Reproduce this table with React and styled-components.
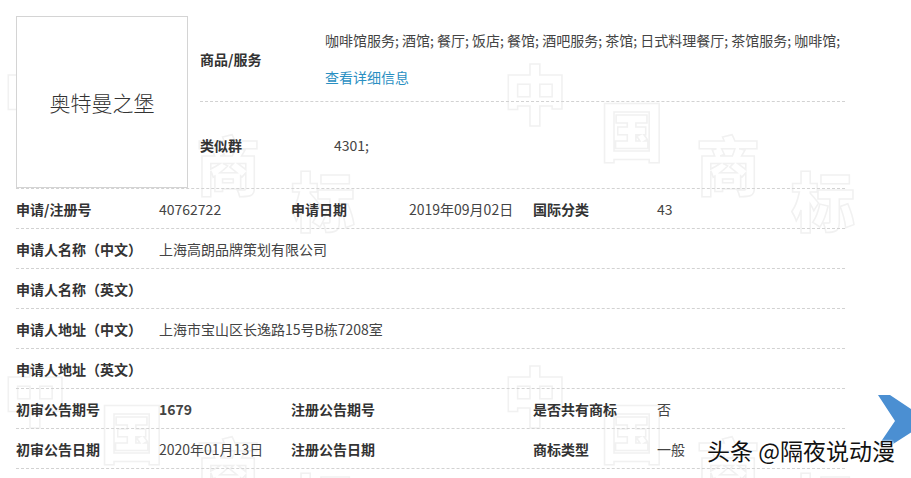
import React from "react";
import styled, { createGlobalStyle } from "styled-components";

const Global = createGlobalStyle`
  html, body { margin: 0; padding: 0; background: #fff; }
  body {
    font-family: "Noto Sans CJK SC", "Noto Sans", sans-serif;
    color: #333;
    overflow: hidden;
  }
`;

const Page = styled.div`
  position: relative;
  width: 911px;
  height: 478px;
  overflow: hidden;
  box-sizing: border-box;
  padding: 16px 0 0 16px;
`;

const WatermarkLayer = styled.div`
  position: absolute;
  inset: 0;
  z-index: 0;
  pointer-events: none;
`;

const WmChar = styled.span`
  position: absolute;
  font-family: "Noto Sans CJK SC", sans-serif;
  font-weight: 900;
  font-size: 64px;
  line-height: 1;
  color: #fff;
  -webkit-text-stroke: 1.5px #f1f1f1;
`;

const Content = styled.div`
  position: relative;
  z-index: 1;
  width: 829px;
`;

const TopSection = styled.div`
  display: flex;
  border-bottom: 1px dashed #d2d2d2;
`;

const ImageBox = styled.div`
  width: 170px;
  height: 170px;
  border: 1px solid #d4d4d4;
  background: #fff;
  display: flex;
  align-items: center;
  justify-content: center;
  font-size: 21px;
  font-weight: 300;
  color: #333;
  flex-shrink: 0;
`;

const RightPart = styled.div`
  flex: 1;
  margin-left: 12px;
  display: flex;
  flex-direction: column;
`;

const SubRow = styled.div`
  display: flex;
  align-items: center;
  height: ${(p) => p.$h}px;
  border-bottom: ${(p) => (p.$line ? "1px dashed #d2d2d2" : "none")};
`;

const SubLabel = styled.div`
  width: 125px;
  flex-shrink: 0;
  font-size: 14px;
  font-weight: 700;
  color: #333;
`;

const SubValue = styled.div`
  font-size: 14px;
  color: #444;
  line-height: 37px;
  padding-left: ${(p) => p.$indent || 0}px;
  white-space: nowrap;
`;

const Link = styled.div`
  color: #2a8fc2;
`;

const Row = styled.div`
  display: grid;
  grid-template-columns: 143px 132px 118px 124px 124px 1fr;
  align-items: center;
  height: 39px;
  border-bottom: 1px dashed #d2d2d2;
`;

const Label = styled.div`
  font-size: 14px;
  font-weight: 700;
  color: #333;
  white-space: nowrap;
`;

const Value = styled.div`
  font-size: 14px;
  color: #444;
  font-weight: ${(p) => (p.$bold ? 700 : 400)};
  white-space: nowrap;
  grid-column: ${(p) => (p.$span ? "2 / span 5" : "auto")};
`;

const Arrow = styled.svg`
  position: absolute;
  left: 878px;
  top: 395px;
  z-index: 2;
`;

const Signature = styled.div`
  position: absolute;
  left: 707px;
  top: 433px;
  z-index: 2;
  font-size: 23px;
  line-height: 34px;
  color: #111;
  white-space: nowrap;
  text-shadow: 0 0 2px #fff, 0 0 2px #fff, 1px 1px 1px #fff;
`;

const wmChars = ["中", "国", "商", "标"];
const wmOffsets = [
  [0, 0],
  [97, 37],
  [193, 71],
  [288, 107],
];
const wmOrigins = [
  [3, 59],
  [503, 59],
  [3, 361],
  [503, 361],
];

const rows = [
  [["申请/注册号"], ["40762722"], ["申请日期"], ["2019年09月02日"], ["国际分类"], ["43"]],
  [["申请人名称（中文）"], ["上海高朗品牌策划有限公司", "span"]],
  [["申请人名称（英文）"]],
  [["申请人地址（中文）"], ["上海市宝山区长逸路15号B栋7208室", "span"]],
  [["申请人地址（英文）"]],
  [["初审公告期号"], ["1679", "bold"], ["注册公告期号"], [""], ["是否共有商标"], ["否"]],
  [["初审公告日期"], ["2020年01月13日"], ["注册公告日期"], [""], ["商标类型"], ["一般"]],
];

export default function App() {
  return (
    <>
      <Global />
      <Page>
        <WatermarkLayer aria-hidden="true">
          {wmOrigins.map(([ox, oy], gi) =>
            wmChars.map((c, i) => (
              <WmChar
                key={`${gi}-${i}`}
                style={{ left: ox + wmOffsets[i][0], top: oy + wmOffsets[i][1] }}
              >
                {c}
              </WmChar>
            ))
          )}
        </WatermarkLayer>
        <Content>
          <TopSection>
            <ImageBox>奥特曼之堡</ImageBox>
            <RightPart>
              <SubRow $h={85} $line>
                <SubLabel>商品/服务</SubLabel>
                <SubValue>
                  <div>咖啡馆服务; 酒馆; 餐厅; 饭店; 餐馆; 酒吧服务; 茶馆; 日式料理餐厅; 茶馆服务; 咖啡馆;</div>
                  <Link>查看详细信息</Link>
                </SubValue>
              </SubRow>
              <SubRow $h={86}>
                <SubLabel>类似群</SubLabel>
                <SubValue $indent={9}>4301;</SubValue>
              </SubRow>
            </RightPart>
          </TopSection>
          {rows.map((cells, ri) => (
            <Row key={ri}>
              {cells.map(([text, mod], ci) =>
                ci % 2 === 0 ? (
                  <Label key={ci}>{text}</Label>
                ) : (
                  <Value key={ci} $bold={mod === "bold"} $span={mod === "span"}>
                    {text}
                  </Value>
                )
              )}
            </Row>
          ))}
        </Content>
        <Arrow width="52" height="52" viewBox="0 0 52 52">
          <polygon points="0,0 12,0 51,26 12,51 0,51 17,26" fill="#4b8fd2" />
        </Arrow>
        <Signature>头条 @隔夜说动漫</Signature>
      </Page>
    </>
  );
}
